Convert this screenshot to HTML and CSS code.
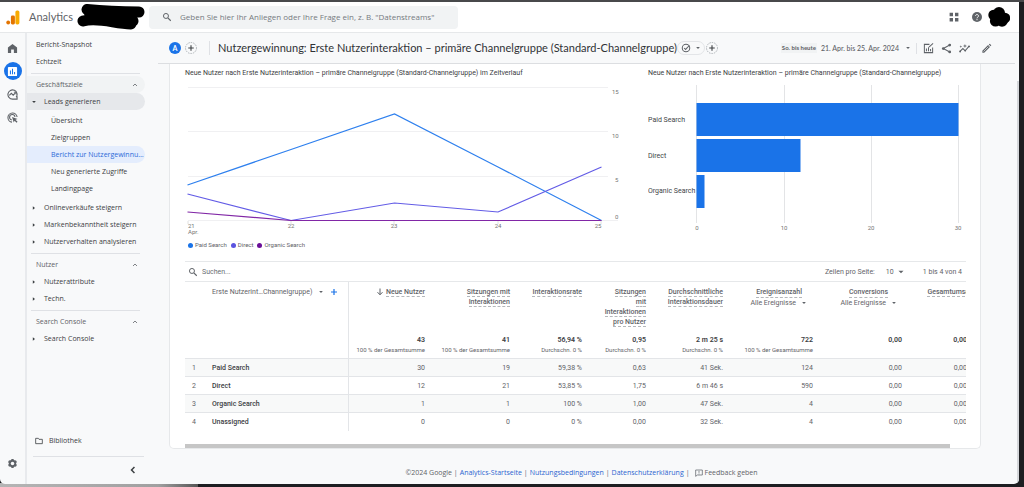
FILE: index.html
```html
<!DOCTYPE html>
<html lang="de">
<head>
<meta charset="utf-8">
<meta name="viewport" content="width=device-width, initial-scale=1">
<title>Analytics – Nutzergewinnung</title>
<link rel="stylesheet" href="styles.css">
</head>
<body>
<svg class="defs" aria-hidden="true">
  <symbol id="up" viewBox="0 0 24 24"><path d="M6 15l6-6 6 6" fill="none" stroke="currentColor" stroke-width="2.4"/></symbol>
  <symbol id="left" viewBox="0 0 24 24"><path d="M15.5 5l-7 7 7 7" fill="none" stroke="currentColor" stroke-width="3.6"/></symbol>
  <symbol id="right-tri" viewBox="0 0 6 6"><path d="M1.8 1.3L4 3 1.8 4.7z" fill="currentColor"/></symbol>
  <symbol id="down-tri" viewBox="0 0 6 6"><path d="M1.1 2h3.800L3 4z" fill="currentColor"/></symbol>
  <symbol id="search" viewBox="0 0 24 24"><circle cx="9.5" cy="9.5" r="6" fill="none" stroke="currentColor" stroke-width="2.4"/><path d="M14 14l7 7" stroke="currentColor" stroke-width="2.8"/></symbol>
  <symbol id="add-circle" viewBox="0 0 24 24"><circle cx="12" cy="12" r="11" fill="none" stroke="#9aa0a6" stroke-width="1.5" stroke-dasharray="3 2"/><path d="M12 6.5v11M6.5 12h11" stroke="currentColor" stroke-width="2.2"/></symbol>
</svg>
<div class="window">
  <header class="topbar">
    <a class="brand" href="#">
      <svg class="logo" viewBox="0 0 14 15" aria-hidden="true"><rect x="9.4" y="0.4" width="4" height="14" rx="1.6" fill="#f9ab00"/><rect x="4.9" y="5.6" width="4" height="8.8" rx="1.4" fill="#e37400"/><circle cx="2.2" cy="12.5" r="1.9" fill="#e37400"/></svg>
      <span>Analytics</span>
    </a>
    <svg class="scribble" viewBox="0 0 68 26" aria-hidden="true"><path d="M10 5.500C24 7 42 8 62 8M6 17C20 13 36 19 54 20M12 8C24 14 38 13 56 17" fill="none" stroke="#000" stroke-width="11" stroke-linecap="round"/></svg>
    <form class="searchbox" role="search">
      <svg class="i10" aria-hidden="true"><use href="#search"/></svg>
      <input type="text" aria-label="Suche" placeholder="Geben Sie hier Ihr Anliegen oder Ihre Frage ein, z. B. &quot;Datenstreams&quot;">
    </form>
    <div class="top-actions">
      <button aria-label="Apps"><svg class="i10" viewBox="0 0 10 10"><path d="M.6.8h3.4v3.4H.6zM6 .8h3.4v3.4H6zM.6 6h3.4v3.4H.6zM6 6h3.4v3.4H6z" fill="#5f6368"/></svg></button>
      <button aria-label="Hilfe"><svg class="i10" viewBox="0 0 24 24"><circle cx="12" cy="12" r="12" fill="#5f6368"/><path d="M8.5 9.5a3.5 3.5 0 1 1 5.5 2.8c-1.3.9-2 1.3-2 2.9" fill="none" stroke="#fff" stroke-width="2.2"/><circle cx="12" cy="18.3" r="1.4" fill="#fff"/></svg></button>
      <svg class="avatar" viewBox="0 0 22 20" aria-hidden="true"><circle cx="11" cy="6" r="6"/><circle cx="5.5" cy="8" r="5.2"/><circle cx="17" cy="11" r="5.2"/><circle cx="7.5" cy="14" r="5.6"/><circle cx="14" cy="14" r="5.8"/></svg>
    </div>
  </header>

  <div class="body">
    <nav class="rail" aria-label="Hauptnavigation">
      <a href="#" aria-label="Startseite"><svg viewBox="0 0 24 24"><path d="M12 2l10 8v12h-7v-8H9v8H2V10z" fill="#5f6368"/></svg></a>
      <a class="current" href="#" aria-label="Berichte"><svg viewBox="0 0 24 24"><rect x="2" y="2" width="20" height="20" rx="2" fill="#fff"/><path d="M7.5 10v8M12 6v12M16.5 13v5" stroke="#1a73e8" stroke-width="2.2"/></svg></a>
      <a href="#" aria-label="Explorative Datenanalyse"><svg viewBox="0 0 24 24"><path d="M20 18a10 10 0 1 0-8 4h10v-6" fill="none" stroke="#5f6368" stroke-width="2.4"/><path d="M5 14l4.5-4.500 4 4L19 8" fill="none" stroke="#5f6368" stroke-width="2.4"/><path d="M15 7h5v5" fill="none" stroke="#5f6368" stroke-width="2"/></svg></a>
      <a href="#" aria-label="Werbung"><svg viewBox="0 0 24 24"><path d="M11 22a10 10 0 1 1 11-11M10.500 17.500A6 6 0 1 1 17.500 10.500" fill="none" stroke="#5f6368" stroke-width="2.4"/><path d="M11 11l12 4-4.500 2 4.500 4.500-2 2-4.500-4.500-1.800 4z" fill="#5f6368"/></svg></a>
      <a class="settings" href="#" aria-label="Verwaltung"><svg viewBox="0 0 24 24"><path d="M12 4.500v15M5.500 8.200l13 7.600M18.500 8.200l-13 7.600" stroke="#5f6368" stroke-width="5" stroke-linecap="square"/><circle cx="12" cy="12" r="8" fill="#5f6368"/><circle cx="12" cy="12" r="3.800" fill="#f8f9fa"/></svg></a>
    </nav>

    <aside class="sidebar">
      <nav aria-label="Berichte">
        <div class="group">
          <a class="item top" href="#">Bericht-Snapshot</a>
          <a class="item top" href="#">Echtzeit</a>
        </div>
        <div class="group">
          <button class="item section shaded">Geschäftsziele<svg class="i8"><use href="#up"/></svg></button>
          <a class="item parent open" href="#"><svg class="i6"><use href="#down-tri"/></svg>Leads generieren</a>
          <div class="submenu">
            <a class="item" href="#">Übersicht</a>
            <a class="item" href="#">Zielgruppen</a>
            <a class="item active" href="#">Bericht zur Nutzergewinnu…</a>
            <a class="item" href="#">Neu generierte Zugriffe</a>
            <a class="item" href="#">Landingpage</a>
          </div>
          <a class="item parent" href="#"><svg class="i6"><use href="#right-tri"/></svg>Onlineverkäufe steigern</a>
          <a class="item parent" href="#"><svg class="i6"><use href="#right-tri"/></svg>Markenbekanntheit steigern</a>
          <a class="item parent" href="#"><svg class="i6"><use href="#right-tri"/></svg>Nutzerverhalten analysieren</a>
        </div>
        <div class="group">
          <button class="item section">Nutzer<svg class="i8"><use href="#up"/></svg></button>
          <a class="item parent" href="#"><svg class="i6"><use href="#right-tri"/></svg>Nutzerattribute</a>
          <a class="item parent" href="#"><svg class="i6"><use href="#right-tri"/></svg>Techn.</a>
        </div>
        <div class="group">
          <button class="item section">Search Console<svg class="i8"><use href="#up"/></svg></button>
          <a class="item parent" href="#"><svg class="i6"><use href="#right-tri"/></svg>Search Console</a>
        </div>
      </nav>
      <div class="side-foot">
        <a class="item library" href="#"><svg class="i8" viewBox="0 0 24 24"><path d="M2 4h8l2 3h10v13H2z" fill="none" stroke="#3c4043" stroke-width="2.400"/></svg>Bibliothek</a>
        <button class="collapse" aria-label="Navigation einklappen"><svg class="i10"><use href="#left"/></svg></button>
      </div>
    </aside>

    <main class="main">
      <div class="titlebar">
        <span class="chip-a">A</span>
        <button class="plus" aria-label="Vergleich hinzufügen"><svg class="i12"><use href="#add-circle"/></svg></button>
        <h1>Nutzergewinnung: Erste Nutzerinteraktion – primäre Channelgruppe (Standard-Channelgruppe)</h1>
        <button class="status" aria-label="Status"><svg class="i10" viewBox="0 0 24 24"><circle cx="12" cy="12" r="9" fill="none" stroke="#5f6368" stroke-width="2.500"/><path d="M7.500 12l3.500 3.500L20 6" fill="none" stroke="#5f6368" stroke-width="2.500"/></svg><svg class="i6"><use href="#down-tri"/></svg></button>
        <button class="plus" aria-label="Filter hinzufügen"><svg class="i12"><use href="#add-circle"/></svg></button>
        <div class="tools">
          <button class="date"><span class="preset">So. bis heute</span><span>21. Apr. bis 25. Apr. 2024</span><svg class="i6"><use href="#down-tri"/></svg></button>
          <div class="tool-icons">
            <button aria-label="Bericht anpassen"><svg viewBox="0 0 24 24"><path d="M14 3H3v18h18V10" fill="none" stroke="#5f6368" stroke-width="2.200"/><path d="M7.500 12v6M12 9v9M16.500 13v5M13 9l9-8" stroke="#5f6368" stroke-width="2.200"/></svg></button>
            <button aria-label="Teilen"><svg viewBox="0 0 24 24"><path d="M19 4.500L5 12l14 7.500" fill="none" stroke="#5f6368" stroke-width="2.200"/><circle cx="19" cy="4.500" r="3" fill="#5f6368"/><circle cx="5" cy="12" r="3" fill="#5f6368"/><circle cx="19" cy="19.500" r="3" fill="#5f6368"/></svg></button>
            <button aria-label="Statistiken"><svg viewBox="0 0 24 24"><path d="M1.500 19l7-7 5 5L22 7" fill="none" stroke="#5f6368" stroke-width="2.400"/><circle cx="2.500" cy="18.500" r="2" fill="#5f6368"/><circle cx="13.500" cy="16.500" r="2" fill="#5f6368"/><circle cx="22" cy="7.500" r="2" fill="#5f6368"/><path d="M13 2l1.200 3.300L17.500 6.500l-3.300 1.200L13 11l-1.200-3.300L8.500 6.500l3.300-1.200zM4 5l.8 2 2 .8-2 .8L4 11l-.8-2.400-2-.8 2-.8z" fill="#5f6368"/></svg></button>
            <button class="edit" aria-label="Bearbeiten"><svg viewBox="0 0 24 24"><path d="M3 21v-4L15.500 4.500l4 4L7 21zM17 3l2-1.500 3.500 3.500L21 7z" fill="#5f6368"/><path d="M5.500 18.500L16 8" stroke="#fff" stroke-width="1.400"/></svg></button>
          </div>
        </div>
      </div>

      <section class="card">
        <div class="charts">
          <div>
            <h2>Neue Nutzer nach Erste Nutzerinteraktion – primäre Channelgruppe (Standard-Channelgruppe) im Zeitverlauf</h2>
            <svg class="chart" viewBox="0 0 437 159" role="img" aria-label="Neue Nutzer im Zeitverlauf">
              <path d="M3 6.500h420M3 50.500h420M3 95.500h420M3 139.500h430" stroke="#f0f0f2" fill="none"/>
              <path d="M3 140v3M106 140v3M209 140v3M313 140v3M416 140v3" stroke="#e0e0e0" fill="none"/>
              <g fill="none" stroke-width="1.200">
                <polyline points="2.500,104 106,68.500 209.500,33 313,86 416.500,139.500" stroke="#2f80ee"/>
                <polyline points="2.500,113 106,139.500 209.500,122 313,131 416.500,86" stroke="#635ce6"/>
                <polyline points="2.500,131 106,139.500 416.500,139.500" stroke="#8127a6"/>
              </g>
              <g class="ticks">
                <text x="427" y="13">15</text><text x="427" y="57">10</text><text x="430" y="101">5</text><text x="430" y="138">0</text>
                <text x="3" y="147">21</text><text x="3" y="153">Apr.</text>
                <g text-anchor="middle"><text x="106" y="147">22</text><text x="209" y="147">23</text><text x="313" y="147">24</text><text x="413" y="147">25</text></g>
              </g>
            </svg>
            <ul class="legend"><li class="paid">Paid Search</li><li class="direct">Direct</li><li class="organic">Organic Search</li></ul>
          </div>
          <div>
            <h2>Neue Nutzer nach Erste Nutzerinteraktion – primäre Channelgruppe (Standard-Channelgruppe)</h2>
            <svg class="chart" viewBox="0 0 318 159" role="img" aria-label="Neue Nutzer nach Channelgruppe">
              <path d="M48.500 4v138M136.500 4v138M223.500 4v138M310.500 4v138" stroke="#e3e4e6"/>
              <g fill="#1a73e8"><rect x="48.500" y="22" width="262" height="33"/><rect x="48.500" y="58" width="104" height="33"/><rect x="48.500" y="94" width="8" height="33"/></g>
              <g class="labels"><text x="0" y="41">Paid Search</text><text x="0" y="77">Direct</text><text x="0" y="112">Organic Search</text></g>
              <g class="ticks" text-anchor="middle"><text x="49" y="149">0</text><text x="136" y="149">10</text><text x="223" y="149">20</text><text x="310" y="149">30</text></g>
            </svg>
          </div>
        </div>

        <div class="tablebar">
          <svg class="i10" aria-hidden="true"><use href="#search"/></svg>
          <input type="text" aria-label="Tabelle durchsuchen" placeholder="Suchen...">
          <label for="rows">Zeilen pro Seite:</label>
          <span class="select"><select id="rows"><option>10</option><option>25</option></select><svg class="i8"><use href="#down-tri"/></svg></span>
          <span class="range">1 bis 4 von 4</span>
        </div>

        <div class="scroller">
          <table>
            <colgroup><col class="c-idx"><col class="c-name"><col class="c-new"><col class="c-ses"><col class="c-rate"><col class="c-per"><col class="c-dur"><col class="c-evt"><col class="c-conv"><col class="c-rev"></colgroup>
            <thead>
              <tr class="heads">
                <td></td>
                <th class="dim" scope="col"><span>Erste Nutzerint…Channelgruppe)</span><svg class="i6"><use href="#down-tri"/></svg><button aria-label="Dimension hinzufügen"><svg class="i8" viewBox="0 0 8 8"><path d="M4 1v6M1 4h6" stroke="#1a73e8" stroke-width="1.200"/></svg></button></th>
                <th scope="col"><svg class="sort" viewBox="0 0 8 8"><path d="M4 .5v6M1.500 4.200L4 6.800l2.500-2.600" fill="none" stroke="#5f6368"/></svg><u>Neue Nutzer</u></th>
                <th scope="col"><u>Sitzungen mit<br>Interaktionen</u></th>
                <th scope="col"><u>Interaktionsrate</u></th>
                <th scope="col"><u>Sitzungen<br>mit<br>Interaktionen<br>pro Nutzer</u></th>
                <th scope="col"><u>Durchschnittliche<br>Interaktionsdauer</u></th>
                <th class="with-menu" scope="col"><u>Ereignisanzahl</u><button>Alle Ereignisse<svg class="i6"><use href="#down-tri"/></svg></button></th>
                <th class="with-menu wide" scope="col"><u>Conversions</u><button>Alle Ereignisse<svg class="i6"><use href="#down-tri"/></svg></button></th>
                <th scope="col"><u>Gesamtumsatz</u></th>
              </tr>
              <tr class="totals">
                <td></td><td></td>
                <td><b>43</b><small>100 % der Gesamtsumme</small></td>
                <td><b>41</b><small>100 % der Gesamtsumme</small></td>
                <td><b>56,94 %</b><small>Durchschn. 0 %</small></td>
                <td><b>0,95</b><small>Durchschn. 0 %</small></td>
                <td><b>2 m 25 s</b><small>Durchschn. 0 %</small></td>
                <td><b>722</b><small>100 % der Gesamtsumme</small></td>
                <td><b>0,00</b></td>
                <td><b>0,00</b></td>
              </tr>
            </thead>
            <tbody>
              <tr><td>1</td><th scope="row">Paid Search</th><td>30</td><td>19</td><td>59,38 %</td><td>0,63</td><td>41 Sek.</td><td>124</td><td>0,00</td><td>0,00</td></tr>
              <tr><td>2</td><th scope="row">Direct</th><td>12</td><td>21</td><td>53,85 %</td><td>1,75</td><td>6 m 46 s</td><td>590</td><td>0,00</td><td>0,00</td></tr>
              <tr><td>3</td><th scope="row">Organic Search</th><td>1</td><td>1</td><td>100 %</td><td>1,00</td><td>47 Sek.</td><td>4</td><td>0,00</td><td>0,00</td></tr>
              <tr><td>4</td><th scope="row">Unassigned</th><td>0</td><td>0</td><td>0 %</td><td>0,00</td><td>32 Sek.</td><td>4</td><td>0,00</td><td>0,00</td></tr>
            </tbody>
          </table>
        </div>
        <div class="hscroll"></div>
      </section>

      <footer class="footer">
        <span>©2024 Google |</span>
        <a href="#">Analytics-Startseite</a><span>|</span>
        <a href="#">Nutzungsbedingungen</a><span>|</span>
        <a href="#">Datenschutzerklärung</a><span>|</span>
        <button><svg class="i8" viewBox="0 0 24 24"><path d="M2 3h20v15H7l-5 4z" fill="none" stroke="#5f6368" stroke-width="2.200"/><path d="M12 5.500v6M12 13.500v2.500" stroke="#5f6368" stroke-width="2.200"/></svg>Feedback geben</button>
      </footer>
    </main>
    <div class="vscroll"></div>
  </div>
</div>
</body>
</html>
```
FILE: styles.css
```css
* { box-sizing: border-box; }
html { height: 100%; }
body {
  margin: 0;
  min-height: 100%;
  display: flex;
  flex-direction: column;
  padding: 2px 5px 3px 0;
  background:
    linear-gradient(#48494b, #48494b) top / 100% 2px no-repeat,
    linear-gradient(90deg, #b5b5b5, #a0a0a0 80%, #555) bottom left / 198px 4px no-repeat,
    #1d1e21;
  font: 7px/10px Roboto, "Open Sans", sans-serif;
  color: #3c4043;
}
button, input, select { font: inherit; color: inherit; border: 0; padding: 0; margin: 0; background: none; outline: 0; }
button { display: inline-flex; align-items: center; }
a { color: inherit; text-decoration: none; }
svg { display: block; flex: none; }
.defs { position: absolute; width: 0; height: 0; }
.i6 { width: 6px; height: 6px; }
.i8 { width: 8px; height: 8px; }
.i10 { width: 10px; height: 10px; }
.i12 { width: 12px; height: 12px; }

.window { flex: 1; display: flex; flex-direction: column; background: #f8f9fa; border-radius: 0 0 5px 5px; overflow: hidden; }

/* Top bar */
.topbar { display: flex; align-items: center; height: 31px; padding: 0 9px 0 6px; background: #fff; border-bottom: 1px solid #e6e8ea; }
.brand { display: flex; align-items: center; gap: 9px; width: 71px; font: 11px/16px Lato, sans-serif; color: #5f6368; }
.logo { width: 14px; height: 15px; }
.scribble { width: 68px; height: 26px; }
.searchbox { display: flex; align-items: center; gap: 8px; width: 309px; height: 23px; margin-left: 4px; padding-left: 13px; border-radius: 4px; background: #f1f3f4; color: #5f6368; }
.searchbox input { flex: 1; min-width: 0; font-family: "Open Sans", sans-serif; font-size: 8px; }
.searchbox input::placeholder { color: #757a80; opacity: 1; }
.top-actions { display: flex; align-items: center; margin-left: auto; gap: 13px; }
.avatar { width: 22px; height: 20px; margin-left: -7px; }

.body { flex: 1; display: flex; }

/* Icon rail */
.rail { display: flex; flex-direction: column; align-items: center; width: 27px; padding: 6px 0 12px; gap: 5px; border-right: 2px solid #e8eaed; }
.rail a { display: grid; place-items: center; width: 18px; height: 18px; border-radius: 50%; }
.rail svg { width: 11px; height: 11px; }
.rail .current { background: #1a73e8; }
.rail .settings { margin-top: auto; }

/* Report navigation */
.sidebar { display: flex; flex-direction: column; width: 123px; padding-top: 3px; font-family: "Open Sans", sans-serif; }
.group { padding-bottom: 3px; margin-bottom: 2px; }
.group:not(:last-child) { border-bottom: 1px solid transparent; border-image: linear-gradient(90deg, transparent 5px, #dfe1e5 5px, #dfe1e5 112px, transparent 112px) 1; }
.item { display: flex; align-items: center; width: 118px; height: 17px; padding-left: 9px; border-radius: 0 9px 9px 0; font-weight: 500; white-space: nowrap; }
.section { padding-right: 6px; justify-content: space-between; color: #5f6368; font-weight: 400; }
.shaded { background: #f1f3f4; }
.parent { padding-left: 4px; gap: 7px; }
.open { background: #e6e8eb; }
.submenu { padding: 2px 0; }
.submenu .item { padding-left: 24px; }
.submenu .active { background: #e4edfd; color: #2b6bd8; }
.side-foot { margin-top: auto; }
.library { gap: 6px; padding-left: 8px; margin-bottom: 7px; }
.collapse { display: flex; justify-content: flex-end; width: 111px; margin-left: 6px; padding: 8px 6px 9px 0; border-top: 1px solid #dfe1e5; }

/* Report header */
.main { flex: 1; min-width: 0; display: flex; flex-direction: column; }
.titlebar { display: flex; align-items: center; height: 31px; margin: 0 4px 0 8px; padding-left: 11px; border-bottom: 1px solid #dcdee1; font-family: Lato, sans-serif; }
.chip-a { display: grid; place-items: center; width: 12px; height: 12px; border-radius: 50%; background: #1a73e8; color: #fff; font-weight: 700; }
.chip-a + .plus { margin-left: 4px; }
h1 { margin: 0 0 0 12px; padding-left: 8px; border-left: 1px solid #dfe1e5; font-size: 11px; line-height: 14px; font-weight: 400; white-space: nowrap; color: #303236; }
.status { gap: 4px; height: 14px; margin-right: 1px; padding: 0 3px; border: 1px solid #e3e5e8; border-radius: 7px; color: #5f6368; }
.tools { display: flex; align-items: center; margin-left: auto; padding-right: 23px; }
.date { gap: 4px; color: #5f6368; white-space: nowrap; font-weight: 500; }
.preset { padding: 0 1px; background: #f1f3f4; font-size: 6px; font-weight: 700; }
.date .i6 { margin-left: 2px; }
.tool-icons { display: flex; align-items: center; gap: 7px; margin-left: 5px; padding-left: 6px; border-left: 1px solid #dfe1e5; }
.tool-icons svg { width: 11px; height: 11px; }
.edit { margin-left: 4px; }

/* Report card */
.card { margin: 0 38px 0 19px; padding: 4px 14px 0 15px; background: #fff; border: 1px solid #e6e8ea; border-top: 0; border-radius: 0 0 5px 5px; color: #5f6368; }
.charts { display: grid; grid-template-columns: 437fr 318fr; gap: 26px; }
h2 { margin: 0 0 3px; font: 400 7px/10px Roboto, sans-serif; color: #3c4043; white-space: nowrap; }
.chart { width: 100%; height: auto; }
.ticks text { font-size: 6px; fill: #757575; }
.labels text { font-size: 7px; fill: #424548; }
.legend { display: flex; gap: 4px; margin: 0 0 11px; padding: 0 0 0 3px; list-style: none; font-size: 6px; }
.legend li { display: flex; align-items: center; gap: 2px; }
.legend li::before { content: ""; width: 5px; height: 5px; border-radius: 50%; background: #1a73e8; }
.legend .direct::before { background: #5b54e0; }
.legend .organic::before { background: #6a0f98; }

.tablebar { display: flex; align-items: center; height: 21px; padding: 0 4px 0 3px; border: solid #e6e8ea; border-width: 1px 0; }
.tablebar input { flex: 1; min-width: 0; margin-left: 4px; }
.tablebar input::placeholder { color: #6a6e73; opacity: 1; }
.select { display: flex; align-items: center; gap: 3px; margin: 0 18px 0 11px; }
.select select { appearance: none; }

.scroller { overflow: hidden; }
table { width: 101%; table-layout: fixed; border-collapse: collapse; }
.c-idx { width: 27px; } .c-name { width: 136px; } .c-new { width: 77px; } .c-ses { width: 85px; } .c-rate { width: 72px; }
.c-per { width: 64px; } .c-dur { width: 77px; } .c-evt { width: 90px; } .c-conv { width: 89px; } .c-rev { width: 73px; }
td, th { padding: 0; text-align: right; font-weight: 400; white-space: nowrap; }
tr > :nth-child(2) { border-right: 1px solid #e3e5e8; }
.heads > * { height: 52px; padding-top: 5px; vertical-align: top; }
.heads u { text-decoration: none; border-bottom: 1px dashed #b4b7bb; font-weight: 500; }
.heads .dim svg, .heads .dim button, .sort { display: inline-block; vertical-align: middle; }
.heads .dim { padding-right: 10px; }
.dim svg { margin-left: 6px; }
.dim button svg { margin-left: 6px; }
.sort { width: 8px; height: 8px; margin-right: 2px; }
.with-menu { padding-right: 6px; }
.with-menu u { display: inline-block; line-height: 9px; margin-right: 5px; }
.with-menu button { display: flex; gap: 5px; margin-left: auto; }
.heads .wide { padding-right: 5px; }
.wide u { margin-right: 9px; }
.totals td { height: 24px; padding: 1px 0 3px; vertical-align: top; }
.totals b { display: block; font-weight: 600; color: #3c4043; }
.totals small { display: block; font-size: 6px; }
tbody tr { height: 18px; border-top: 1px solid #e3e5e8; }
tbody tr:nth-child(odd) { background: #f8f9f9; }
tbody th { text-align: left; font-weight: 500; color: #3c4043; }
tbody td:first-child { text-align: left; padding-left: 7px; }
tbody td:last-child, .totals td:last-child { padding-right: 8px; }
.hscroll { width: 98%; height: 4px; margin-top: 13px; background: #c6c6c6; }

/* Footer */
.footer { display: flex; align-items: center; justify-content: center; gap: 2px; margin-top: 19px; padding-right: 6px; color: #5f6368; font-family: "Open Sans", sans-serif; }
.footer a { color: #2a64d0; font-weight: 500; }
.footer button { gap: 2px; margin-left: 3px; }
.vscroll { width: 2px; margin: 48px 0 0 -2px; background: #d5d7da; }
```
